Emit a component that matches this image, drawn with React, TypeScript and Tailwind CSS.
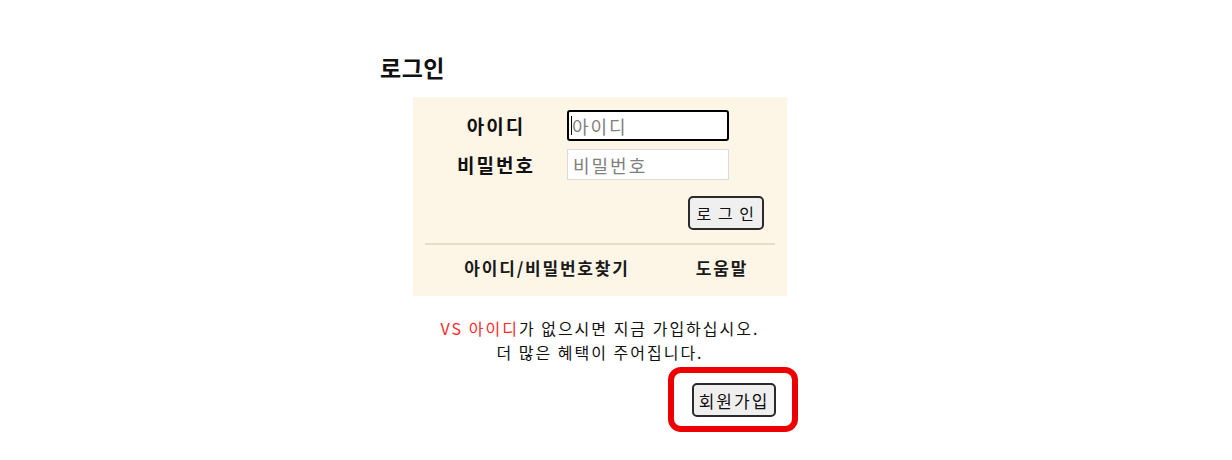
import React from "react";

const font = { fontFamily: '"Noto Sans CJK KR", "Noto Sans", sans-serif' };

export default function App() {
  return (
    <div className="w-full h-[460px] bg-white text-[#111]" style={font}>
      <div className="w-[472px] mx-auto pt-[51px]">
        <h2 className="text-[23px] tracking-[0.5px] font-bold leading-[32px] h-[32px]">로그인</h2>
        <div className="ml-[33px] mt-[14px] w-[374px] h-[199px] bg-[#fdf5e6] px-[12px] pt-[13px]">
          <div className="flex items-center h-[31px]">
            <div className="w-[142px] text-center text-[19px] tracking-[2px] font-bold leading-none">아이디</div>
            <div className="relative">
              <input
                className="w-[162px] h-[31px] border-2 border-black rounded-[3px] bg-white px-[3px] text-[18px] tracking-[2px] outline-none placeholder:text-[#808080]"
                placeholder="아이디"
                readOnly
              />
              <span className="absolute left-[4px] top-[6px] w-px h-[19px] bg-black" />
            </div>
          </div>
          <div className="flex items-center h-[31px] mt-[8px]">
            <div className="w-[142px] text-center text-[19px] tracking-[2px] font-bold leading-none">비밀번호</div>
            <input
              className="w-[162px] h-[31px] border border-[#dcdcdc] bg-white px-[5px] text-[18px] tracking-[2px] outline-none placeholder:text-[#808080]"
              placeholder="비밀번호"
              readOnly
            />
          </div>
          <div className="flex justify-end pr-[11px] mt-[16px]">
            <button className="w-[76px] h-[34px] border-2 border-[#2a2a2a] rounded-[5px] bg-[#efefef] text-[16px] tracking-[1.5px] leading-none text-[#111]">
              로 그 인
            </button>
          </div>
          <div className="h-[2px] bg-[#e6dccb] mt-[13px]" />
          <div className="flex items-center h-[46px] text-[17px] tracking-[1.8px] font-bold text-[#1a1a1a]">
            <div className="w-[244px] text-center">아이디/비밀번호찾기</div>
            <div className="w-[106px] text-center">도움말</div>
          </div>
        </div>
        <div className="ml-[33px] w-[374px] mt-[20px] text-center text-[16px] tracking-[2px] leading-[24px]">
          <p>
            <span className="text-[#ff2a2a]">VS 아이디</span>가 없으시면 지금 가입하십시오.
          </p>
          <p>더 많은 혜택이 주어집니다.</p>
        </div>
        <div className="ml-[33px] w-[374px] flex justify-end pr-[11px] mt-[19px]">
          <div className="relative">
            <button className="w-[84px] h-[34px] border-2 border-[#2a2a2a] rounded-[5px] bg-[#efefef] text-[17px] tracking-[2px] leading-none text-[#111]">
              회원가입
            </button>
            <div className="absolute -left-[24px] -right-[22px] -top-[16px] -bottom-[15px] border-[6px] border-[#ee0000] rounded-[13px] pointer-events-none" />
          </div>
        </div>
      </div>
    </div>
  );
}
